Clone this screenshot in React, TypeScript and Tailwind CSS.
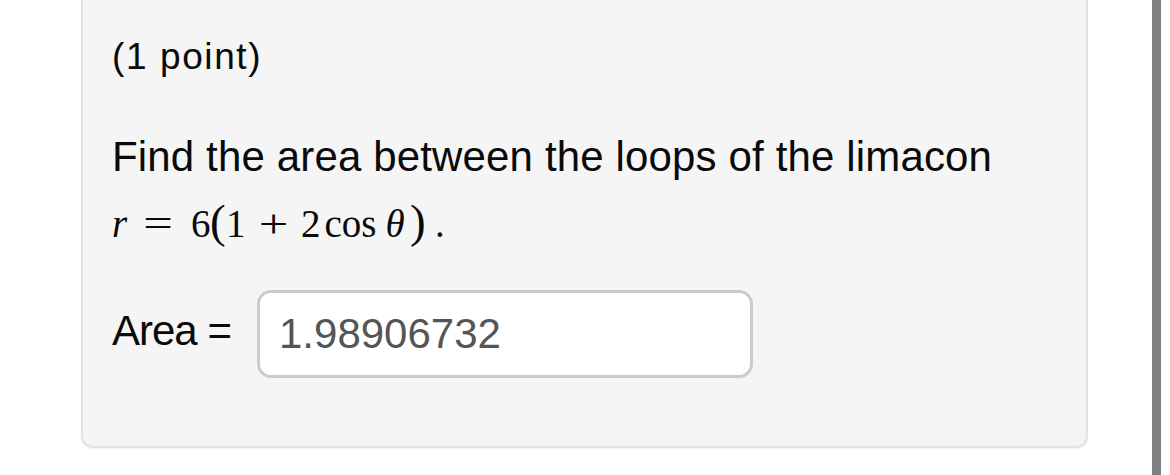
export default function App() {
  return (
    <div className="flex h-[475px] w-[1170px] overflow-hidden bg-white font-['Liberation_Sans',Arial,sans-serif] text-[#0a0a0a]">
      <div className="ml-[81px] mt-[-20px] h-[468px] w-[1007px] shrink-0 rounded-b-[12px] border-2 border-[#e3e3e3] bg-[#f5f5f5] pl-[29px] pt-[55px] shadow-[0_1px_1px_rgba(0,0,0,0.05)]">
        <div className="h-[40px] text-[37px] leading-[40px] tracking-[1.6px]">(1 point)</div>

        <div className="mt-[56px] h-[48px] whitespace-nowrap text-[42px] leading-[48px] tracking-[0.15px]">
          Find the area between the loops of the limacon
        </div>

        <div className="mt-[16px] flex h-[48px] items-baseline whitespace-nowrap font-['Liberation_Serif','Times_New_Roman',serif] text-[39px] leading-[48px]">
          <span className="inline-block w-[20px] italic">r</span>
          <span className="ml-[12px] inline-block w-[28px] scale-x-[1.35] text-center">=</span>
          <span className="ml-[19px] inline-block w-[19px] text-center">6</span>
          <span className="inline-block w-[14px] text-center text-[47px]">(</span>
          <span className="ml-[2px] inline-block w-[18px] text-center">1</span>
          <span className="ml-[15px] inline-block w-[29px] scale-x-[1.35] text-center">+</span>
          <span className="ml-[13px] inline-block w-[18px] text-center">2</span>
          <span className="ml-[5px] inline-block w-[53px] text-center">cos</span>
          <span className="ml-[8px] inline-block w-[20px] text-center italic">θ</span>
          <span className="ml-[5px] inline-block w-[15px] text-center text-[47px]">)</span>
          <span className="ml-[10px] inline-block w-[7px] text-center">.</span>
        </div>

        <div className="mt-[45px] flex items-start">
          <label className="mt-[17px] h-[48px] w-[120px] whitespace-nowrap text-[42px] leading-[48px] tracking-[-1px]">
            Area =
          </label>
          <div className="ml-[25px] flex h-[88px] w-[496px] items-center rounded-[14px] border-[3px] border-[#cbcbcb] bg-white pl-[19px]">
            <span className="text-[42px] leading-[48px] text-[#555]">1.98906732</span>
          </div>
        </div>
      </div>
      <div className="ml-[64px] h-full w-[9px] shrink-0 bg-[#808080]" />
    </div>
  );
}
